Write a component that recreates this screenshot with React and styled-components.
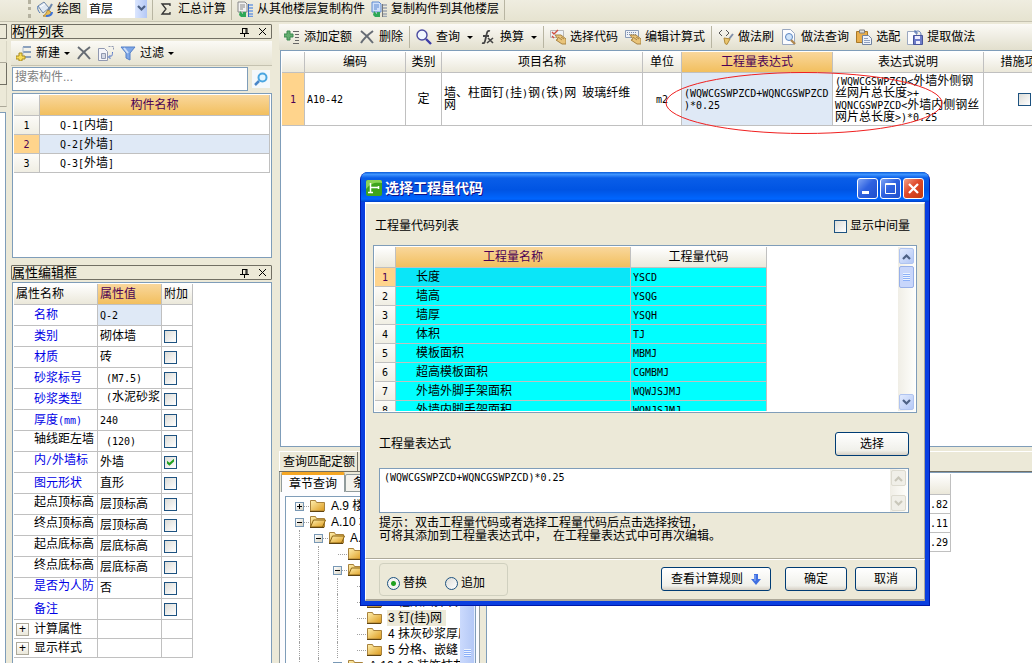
import React, { useState } from 'react';
import styled, { createGlobalStyle, css } from 'styled-components';

const COMPONENTS = ['Q-1[内墙]', 'Q-2[外墙]', 'Q-3[外墙]'];

const PROPERTIES = [
  { name: '名称', value: 'Q-2', link: true, noCheck: true, selected: true },
  { name: '类别', value: '砌体墙', link: true },
  { name: '材质', value: '砖', link: true },
  { name: '砂浆标号', value: ' (M7.5)', link: true },
  { name: '砂浆类型', value: ' (水泥砂浆', link: true, tallValue: true },
  { name: '厚度(mm)', value: '240', link: true },
  { name: '轴线距左墙', value: ' (120)', tall: true },
  { name: '内/外墙标', value: '外墙', link: true, tall: true, checked: true },
  { name: '图元形状', value: '直形', link: true },
  { name: '起点顶标高', value: '层顶标高', tall: true },
  { name: '终点顶标高', value: '层顶标高', tall: true },
  { name: '起点底标高', value: '层底标高', tall: true },
  { name: '终点底标高', value: '层底标高', tall: true },
  { name: '是否为人防', value: '否', link: true, tall: true },
  { name: '备注', value: '', link: true },
];

const CODES = [
  ['长度', 'YSCD'],
  ['墙高', 'YSQG'],
  ['墙厚', 'YSQH'],
  ['体积', 'TJ'],
  ['模板面积', 'MBMJ'],
  ['超高模板面积', 'CGMBMJ'],
  ['外墙外脚手架面积', 'WQWJSJMJ'],
  ['外墙内脚手架面积', 'WQNJSJMJ'],
];

const TREE = [
  { level: 0, text: 'A.9 楼地面', toggle: '+' },
  { level: 0, text: 'A.10 墙柱面', toggle: '-', open: true },
  { level: 1, text: 'A.10.1 抹灰', toggle: '-', open: true },
  { level: 2, text: '说明' },
  { level: 2, text: '一般抹灰', toggle: '-', open: true },
  { level: 3, text: '1 墙面抹灰' },
  { level: 3, text: '2 柱梁面抹灰' },
  { level: 3, text: '3 钉(挂)网', selected: true },
  { level: 3, text: '4 抹灰砂浆厚度' },
  { level: 3, text: '5 分格、嵌缝' },
  { level: 2, text: 'A.10.1.2 装饰抹灰', toggle: '+' },
];

const FULL_CODE = '(WQWCGSWPZCD+WQNCGSWPZCD)*0.25';

// half-width characters take exactly half of a full-width one
const Mixed = ({ children }) =>
  String(children)
    .split(/([ -~]+)/)
    .filter(Boolean)
    .map((part, i) =>
      /^[ -~]/.test(part) ? <Half key={i}>{part}</Half> : part
    );

const Icon = ({ children }) => (
  <IconSvg viewBox="0 0 16 16" aria-hidden="true">
    {children}
  </IconSvg>
);

const PaintIcon = () => (
  <Icon>
    <path d="M1 5l6-4 5 6-6 5z" fill="#dfe8f3" stroke="#7088a8" />
    <path d="M3 6l5-3" stroke="#fff" />
    <path d="M1 5c-1 2 0 5 2 7" stroke="#4f78b8" fill="none" />
    <path d="M15 3l-4 7" stroke="#6b87ad" strokeWidth="2" />
    <path d="M11 9l3 2c0 3-3 5-8 4 3-1 3-4 5-6z" fill="#e8bd55" stroke="#b08a3a" />
    <path d="M9 15c4 0 6-2 6-4" stroke="#3e74d8" strokeWidth="2" fill="none" />
  </Icon>
);

const SumIcon = () => (
  <Icon>
    <path d="M12 5V3H4l4 5-4 5h8v-2" stroke="#333" fill="none" strokeWidth="1.3" />
  </Icon>
);

const CopyFloorIcon = ({ blue }) => (
  <Icon>
    <path d="M1 1h7l2 2v8H1z" fill={blue ? '#cfe0fa' : '#f2f2f2'} stroke={blue ? '#5f8ad0' : '#888'} />
    <path d="M3 4h5M3 6h5M3 8h3" stroke={blue ? '#5f8ad0' : '#888'} />
    <path d="M11 4h5M11 7h5M11 10h5M11 13h5M11 15.500h5" stroke={blue ? '#9aa4b0' : '#6f9be0'} strokeWidth="1.600" />
    <path d="M11.500 3v13" stroke={blue ? '#777' : '#3d6cc0'} />
    <path d="M3 10l3 3v-2h3v5H4l-2-2z" fill="#2fa858" />
  </Icon>
);

const NewIcon = () => (
  <Icon>
    <path d="M7 2h8M7 7h8M7 12h8" stroke="#8aa0bd" strokeWidth="2" />
    <path d="M7 2v10" stroke="#a9bad0" />
    <path d="M3 8h3v3h3v3H6v2H3v-2H0v-3h3z" fill="#f8dc58" stroke="#a88a20" />
  </Icon>
);

const AddIcon = () => (
  <Icon>
    <path d="M3 2h3v3h3v3H6v3H3V8H0V5h3z" fill="#62ad6e" stroke="#3d8a50" />
    <path d="M9 2.500h6M11 5.500h4M11 8.500h4M11 11.500h4M9 14.500h6" stroke="#666" />
  </Icon>
);

const DeleteIcon = () => (
  <Icon>
    <path d="M2 2c4 3 8 7 12 12M14 2C10 5 5 9 2 14" stroke="#666c74" strokeWidth="2" fill="none" />
  </Icon>
);

const CopyIcon = () => (
  <Icon>
    <path d="M.5 3.500h6l3 3v9h-9z" fill="#f5f5fa" stroke="#9098b0" />
    <path d="M3.500 8.500h4v5h-4z" fill="#d4d8e4" stroke="#9098b0" />
    <path d="M10.500 1.500h5v4" stroke="#9098b0" fill="none" strokeDasharray="2 1" />
    <path d="M14.500 7c0 4-1 5-4 5M12.500 10l-2 2 2 2" stroke="#5878c8" fill="none" />
  </Icon>
);

const FilterIcon = () => (
  <Icon>
    <path d="M1 2h14l-5 6v7l-4-2V8z" fill="#7fa7e6" stroke="#5580c8" />
    <path d="M4 3l4 5" stroke="#cfe0fa" strokeWidth="2" />
  </Icon>
);

const SearchIcon = () => (
  <Icon>
    <circle cx="6" cy="6" r="5" fill="#f2f8ff" stroke="#4a4aa0" strokeWidth="1.4" />
    <path d="M10 10l5 5" stroke="#3c3ca8" strokeWidth="2.4" />
  </Icon>
);

const FxIcon = () => (
  <Icon>
    <path d="M10 2c-3-1-3 2-4 6s-1 7-4 6M3 7h6" stroke="#444" strokeWidth="1.8" fill="none" />
    <path d="M8 9l5 5M13 9l-6 5" stroke="#444" strokeWidth="1.6" />
  </Icon>
);

const HandIcon = ({ keyboard }) => (
  <Icon>
    <path d="M.5 1.500h13v7H.5z" fill="#eef2f8" stroke={keyboard ? '#8a9cb8' : '#b8b8b8'} />
    {keyboard ? (
      <path d="M2 3.500h10M2 5.500h10" stroke="#7c8eac" strokeDasharray="1 1" />
    ) : (
      <path d="M2 3l2 2 4-4M2 7l2 2" stroke="#d05040" fill="none" strokeWidth="1.4" />
    )}
    <path d="M5 6l6 0 5 4v5h-4l-6-4 2-1z" fill="#e9c47a" stroke="#a98443" />
    <path d="M8 8l4 3M11 8l3 2" stroke="#a98443" />
  </Icon>
);

const BrushIcon = () => (
  <Icon>
    <path d="M4 1L1 4l3 3M8 1l3 3-3 3" stroke="#555" fill="none" />
    <path d="M15 5l-4 5" stroke="#7e8ea8" strokeWidth="2" />
    <path d="M6 9l6 1-3 5.500-2-1z" fill="#eac56e" stroke="#b08a3a" />
  </Icon>
);

const DocSearchIcon = () => (
  <Icon>
    <path d="M1.500.5h8l4 4v11h-12z" fill="#fbfcff" stroke="#9aa8c0" />
    <circle cx="8" cy="8" r="3.5" fill="#cfe4fa" stroke="#5c86c0" />
    <path d="M10 11l4 4" stroke="#b08850" strokeWidth="2.4" />
  </Icon>
);

const PasteIcon = () => (
  <Icon>
    <path d="M.5 2.500h11v11H.5z" fill="#e8ae4c" stroke="#a87828" />
    <path d="M3.500 1h5v3h-5z" fill="#dcdcdc" stroke="#808080" />
    <path d="M6.500 6.500h6l3 3v6h-9z" fill="#eff3fa" stroke="#7082a0" />
    <path d="M8 9.500h4M8 11.500h6M8 13.500h6" stroke="#90a0c0" />
  </Icon>
);

const ExtractIcon = () => (
  <Icon>
    <path d="M.5 2.500h9v13h-9z" fill="#fbfcff" stroke="#9aa8c0" />
    <path d="M6.500 6.500h9v9h-9z" fill="#6e7cc8" stroke="#47549c" />
    <path d="M8 7h5v3H8zM9 12h4v3H9z" fill="#eef" />
    <path d="M8 3c3-2 6-1 6 3M8 1v3h3" stroke="#5878b8" fill="none" />
  </Icon>
);

const FolderIcon = ({ open }) => (
  <Icon>
    <defs>
      <linearGradient id="folder" x1="0" y1="0" x2="1" y2="1">
        <stop offset="0" stopColor="#fff0b0" />
        <stop offset="1" stopColor="#dc9a1c" />
      </linearGradient>
    </defs>
    <path d="M.5 13V2.500h5l1 2h8V13z" fill="url(#folder)" stroke="#a8823c" />
    {open && <path d="M.5 13l3-7h12l-3 7z" fill="url(#folder)" stroke="#8a6414" />}
    <path d="M0 13.500h14" stroke="#5f4310" />
  </Icon>
);

const PanelHeader = ({ title }) => (
  <PanelTitle>
    <h2>{title}</h2>
    <TitleButton aria-label="固定">
      <svg width="9" height="10" viewBox="0 0 9 10">
        <path d="M2.5 1v5M2 1.5h5M6 1v5M7 1v5M0 6.5h9M4.5 6v4" stroke="#000" />
      </svg>
    </TitleButton>
    <TitleButton aria-label="关闭">
      <svg width="9" height="9" viewBox="0 0 9 9">
        <path d="M1 1l7 7M8 1L1 8" stroke="#000" />
      </svg>
    </TitleButton>
  </PanelTitle>
);

const Chevron = ({ down }) => (
  <svg width="9" height="7" viewBox="0 0 9 7" aria-hidden="true">
    <path d={down ? 'M1 1l3.5 3.5L8 1' : 'M1 6l3.5-3.5L8 6'} fill="none" stroke="currentColor" strokeWidth="2.2" />
  </svg>
);

const VScroll = ({ disabled, thumb }) => (
  <ScrollTrack>
    <ScrollButton disabled={disabled} aria-label="向上">
      <Chevron />
    </ScrollButton>
    {thumb && (
      <ScrollThumb>
        <Grip />
      </ScrollThumb>
    )}
    <Spacer />
    <ScrollButton disabled={disabled} aria-label="向下">
      <Chevron down />
    </ScrollButton>
  </ScrollTrack>
);

const ComponentList = () => (
  <>
    <PanelHeader title="构件列表" />
    <PanelToolbar>
      <ToolButton>
        <NewIcon />
        新建
        <Caret />
      </ToolButton>
      <ToolButton aria-label="删除">
        <DeleteIcon />
      </ToolButton>
      <ToolButton aria-label="复制">
        <CopyIcon />
      </ToolButton>
      <ToolButton>
        <FilterIcon />
        过滤
        <Caret />
      </ToolButton>
    </PanelToolbar>
    <SearchRow>
      <SearchInput aria-label="搜索构件" placeholder="搜索构件..." />
      <SearchButton aria-label="搜索">
        <svg width="14" height="14" viewBox="0 0 14 14">
          <circle cx="8.500" cy="5.500" r="4" fill="#e4f5ff" stroke="#4aa5e0" strokeWidth="2" />
          <path d="M5 9l-4 4" stroke="#4a86c8" strokeWidth="2.500" />
        </svg>
      </SearchButton>
    </SearchRow>
    <ListBox>
      <Grid>
        <colgroup>
          <Col $w={26} />
          <col />
        </colgroup>
        <thead>
          <tr>
            <HeadCell />
            <HeadCell $active>构件名称</HeadCell>
          </tr>
        </thead>
        <tbody>
          {COMPONENTS.map((name, i) => (
            <tr key={name}>
              <NumCell $active={i === 1}>
                <Mixed>{i + 1}</Mixed>
              </NumCell>
              <Cell $indent $selected={i === 1}>
                <Mixed>{name}</Mixed>
              </Cell>
            </tr>
          ))}
        </tbody>
      </Grid>
    </ListBox>
  </>
);

const PropertyEditor = () => (
  <>
    <PanelHeader title="属性编辑框" />
    <PropertyBox>
      <Grid $width={179}>
        <colgroup>
          <Col $w={84} />
          <Col $w={64} />
          <Col $w={31} />
        </colgroup>
        <thead>
          <tr>
            <HeadCell $left>属性名称</HeadCell>
            <HeadCell $left $active>
              属性值
            </HeadCell>
            <HeadCell $left>附加</HeadCell>
          </tr>
        </thead>
        <tbody>
          {PROPERTIES.map((p) => (
            <tr key={p.name}>
              <PropCell $indent $link={p.link} $tall={p.tall}>
                <Mixed>{p.name}</Mixed>
              </PropCell>
              <PropCell $selected={p.selected} $tall={p.tallValue}>
                <Mixed>{p.value}</Mixed>
              </PropCell>
              <PropCell>
                {!p.noCheck && (
                  <CheckBox type="checkbox" aria-label={p.name} defaultChecked={p.checked} />
                )}
              </PropCell>
            </tr>
          ))}
          {['计算属性', '显示样式'].map((name) => (
            <tr key={name}>
              <Cell>
                <GroupLabel>
                  <ExpandButton aria-label="展开">+</ExpandButton>
                  {name}
                </GroupLabel>
              </Cell>
              <Cell />
              <Cell />
            </tr>
          ))}
        </tbody>
      </Grid>
    </PropertyBox>
  </>
);

const QuotaToolbar = () => (
  <QuotaBar>
    <ToolButton><AddIcon />添加定额</ToolButton>
    <ToolButton><DeleteIcon />删除</ToolButton>
    <Separator />
    <ToolButton $wide><SearchIcon />查询<Caret /></ToolButton>
    <ToolButton $wide><FxIcon />换算<Caret /></ToolButton>
    <Separator />
    <ToolButton><HandIcon />选择代码</ToolButton>
    <ToolButton><HandIcon keyboard />编辑计算式</ToolButton>
    <Separator />
    <ToolButton><BrushIcon />做法刷</ToolButton>
    <ToolButton><DocSearchIcon />做法查询</ToolButton>
    <ToolButton><PasteIcon />选配</ToolButton>
    <ToolButton><ExtractIcon />提取做法</ToolButton>
  </QuotaBar>
);

const QuotaTable = () => (
  <QuotaBox>
    <Grid $width={784}>
      <colgroup>
        {[23, 101, 36, 201, 39, 151, 151, 82].map((w, i) => (
          <Col key={i} $w={w} />
        ))}
      </colgroup>
      <thead>
        <tr>
          <HeadCell />
          <HeadCell>编码</HeadCell>
          <HeadCell>类别</HeadCell>
          <HeadCell>项目名称</HeadCell>
          <HeadCell>单位</HeadCell>
          <HeadCell $active>工程量表达式</HeadCell>
          <HeadCell>表达式说明</HeadCell>
          <HeadCell>措施项目</HeadCell>
        </tr>
      </thead>
      <tbody>
        <tr>
          <NumCell $active $height={53}>
            <Mixed>1</Mixed>
          </NumCell>
          <Cell><Mixed>A10-42</Mixed></Cell>
          <Cell $center>定</Cell>
          <Cell>
            <Mixed>墙、柱面钉(挂)钢(铁)网 玻璃纤维</Mixed>
            <br />网
          </Cell>
          <Cell $center><Mixed>m2</Mixed></Cell>
          <Cell $selected>
            <Mixed>(WQWCGSWPZCD+WQNCGSWPZCD</Mixed>
            <br />
            <Mixed>)*0.25</Mixed>
          </Cell>
          <Cell>
            <Mixed>(WQWCGSWPZCD&lt;外墙外侧钢</Mixed>
            <br />
            <Mixed>丝网片总长度&gt;+</Mixed>
            <br />
            <Mixed>WQNCGSWPZCD&lt;外墙内侧钢丝</Mixed>
            <br />
            <Mixed>网片总长度&gt;)*0.25</Mixed>
          </Cell>
          <Cell $center>
            <CheckBox type="checkbox" aria-label="措施项目" />
          </Cell>
        </tr>
      </tbody>
    </Grid>
  </QuotaBox>
);

const ChapterTree = () => (
  <TreePane>
    <TabRow>
      <Tab $active>章节查询</Tab>
      <Tab>条件查询</Tab>
    </TabRow>
    <TreeBox>
      <TreeList>
        {TREE.map((node) => (
          <TreeRow key={node.text}>
            {Array.from({ length: node.level }, (_, i) => (
              <TreeGuide key={i} />
            ))}
            <TreeJoint>
              {node.toggle && (
                <TreeToggle aria-label="展开">
                  <svg width="7" height="7" viewBox="0 0 7 7">
                    <path d={node.toggle === '+' ? 'M1 3.5h5M3.5 1v5' : 'M1 3.5h5'} stroke="#000" />
                  </svg>
                </TreeToggle>
              )}
            </TreeJoint>
            <FolderIcon open={node.open} />
            <TreeText $selected={node.selected}>{node.text}</TreeText>
          </TreeRow>
        ))}
      </TreeList>
      <TreeScroll>
        <Grip />
      </TreeScroll>
    </TreeBox>
  </TreePane>
);

const CodeDialog = () => {
  const [mode, setMode] = useState('replace');
  const [expression, setExpression] = useState(FULL_CODE);

  return (
    <DialogFrame role="dialog" aria-label="选择工程量代码">
      <DialogTitle>
        <svg width="16" height="16" viewBox="0 0 16 16" aria-hidden="true">
          <rect width="16" height="16" rx="2" fill="#3fa51c" />
          <path d="M0 9c5-6 9-7 16-6V2a2 2 0 0 0-2-2H2a2 2 0 0 0-2 2z" fill="#8bd455" />
          <path d="M4.500 3v10M2 12.500h5M4 7.500h9M12.500 6v3" stroke="#fff" strokeWidth="1.500" />
        </svg>
        <h1>选择工程量代码</h1>
        <WindowButton aria-label="最小化">
          <svg width="19" height="19" viewBox="0 0 19 19">
            <path d="M4 13.500h7" stroke="#fff" strokeWidth="3" />
          </svg>
        </WindowButton>
        <WindowButton aria-label="最大化">
          <svg width="19" height="19" viewBox="0 0 19 19">
            <path d="M4.500 4.500h10v10h-10zM4 5.500h11" stroke="#fff" fill="none" />
          </svg>
        </WindowButton>
        <WindowButton $close aria-label="关闭">
          <svg width="19" height="19" viewBox="0 0 19 19">
            <path d="M5 5l9 9M14 5l-9 9" stroke="#fff" strokeWidth="2.300" />
          </svg>
        </WindowButton>
      </DialogTitle>
      <DialogBody>
        <ListHeading>
          <span>工程量代码列表</span>
          <CheckLabel>
            <CheckBox type="checkbox" />
            显示中间量
          </CheckLabel>
        </ListHeading>
        <CodeBox>
          <CodeScroll>
            <Grid $width={392}>
              <colgroup>
                <Col $w={21} />
                <Col $w={235} />
                <Col $w={136} />
              </colgroup>
              <thead>
                <tr>
                  <HeadCell />
                  <HeadCell $active>工程量名称</HeadCell>
                  <HeadCell>工程量代码</HeadCell>
                </tr>
              </thead>
              <tbody>
                {CODES.map(([name, code], i) => (
                  <tr key={code}>
                    <NumCell $active={i === 0}>
                      <Mixed>{i + 1}</Mixed>
                    </NumCell>
                    <Cell $indent $cyan $current={i === 0}>
                      {name}
                    </Cell>
                    <Cell $cyan>
                      <Mixed>{code}</Mixed>
                    </Cell>
                  </tr>
                ))}
              </tbody>
            </Grid>
          </CodeScroll>
          <VScroll thumb />
        </CodeBox>
        <ExpressionHeading>
          <label htmlFor="expression">工程量表达式</label>
          <XpButton $w={74}>选择</XpButton>
        </ExpressionHeading>
        <ExpressionBox>
          <ExpressionInput
            id="expression"
            value={expression}
            onChange={(e) => setExpression(e.target.value)}
          />
          <VScroll disabled />
        </ExpressionBox>
        <Hint>
          提示：双击工程量代码或者选择工程量代码后点击选择按钮，
          <br />
          可将其添加到工程量表达式中，<Half> </Half>在工程量表达式中可再次编辑。
        </Hint>
      </DialogBody>
      <DialogFooter>
        <ModeGroup>
          <RadioLabel>
            <Radio
              type="radio"
              name="mode"
              checked={mode === 'replace'}
              onChange={() => setMode('replace')}
            />
            替换
          </RadioLabel>
          <RadioLabel>
            <Radio
              type="radio"
              name="mode"
              checked={mode === 'append'}
              onChange={() => setMode('append')}
            />
            追加
          </RadioLabel>
        </ModeGroup>
        <Spacer />
        <XpButton $w={110} $apart>
          查看计算规则
          <svg width="10" height="11" viewBox="0 0 10 11" aria-hidden="true">
            <path d="M3 0h4v5h3l-5 6-5-6h3z" fill="#3f6fe0" />
            <path d="M4 1v6" stroke="#9dbcff" />
          </svg>
        </XpButton>
        <XpButton $w={62}>确定</XpButton>
        <XpButton $w={62}>取消</XpButton>
      </DialogFooter>
    </DialogFrame>
  );
};

const App = () => {
  return (
    <>
      <GlobalStyle />
      <Page>
        <TopBar>
          <DockedTools />
          <ToolButton><PaintIcon />绘图</ToolButton>
          <FloorField>
            <FloorSelect aria-label="楼层" defaultValue="首层">
              <option>首层</option>
            </FloorSelect>
            <FloorArrow>
              <Chevron down />
            </FloorArrow>
          </FloorField>
          <Separator />
          <ToolButton><SumIcon />汇总计算</ToolButton>
          <Separator />
          <ToolButton><CopyFloorIcon />从其他楼层复制构件</ToolButton>
          <ToolButton><CopyFloorIcon blue />复制构件到其他楼层</ToolButton>
          <Separator />
        </TopBar>
        <Workspace>
          <SideStrip>
            <SideTitle />
            <SideTab />
            <SideTab $raised />
            <SideTab />
            <SideBody />
          </SideStrip>
          <LeftColumn>
            <ComponentList />
            <PropertyEditor />
          </LeftColumn>
          <RightColumn>
            <QuotaToolbar />
            <QuotaTable />
            <QueryPanel>
              <QueryTabs>
                <QueryTab>查询匹配定额</QueryTab>
              </QueryTabs>
              <QueryContent>
                <ChapterTree />
                <ResultBox>
                  <Grid $width={464}>
                    <thead>
                      <tr>
                        <HeadCell />
                      </tr>
                    </thead>
                    <tbody>
                      {['0.82', '0.11', '0.29'].map((v) => (
                        <tr key={v}>
                          <Cell $right>
                            <Mixed>{v}</Mixed>
                          </Cell>
                        </tr>
                      ))}
                    </tbody>
                  </Grid>
                </ResultBox>
              </QueryContent>
            </QueryPanel>
          </RightColumn>
        </Workspace>
        <Highlight viewBox="0 0 278 64" aria-hidden="true">
          <ellipse cx="139" cy="32" rx="138" ry="30.500" fill="none" stroke="#f02020" />
        </Highlight>
        <CodeDialog />
      </Page>
    </>
  );
};

const GlobalStyle = createGlobalStyle`
  *, *::before, *::after {
    box-sizing: border-box;
  }
  body {
    margin: 0;
    overflow: hidden;
  }
  body, button, input, select, textarea {
    font-family: 'Liberation Sans', 'Noto Sans CJK SC', sans-serif;
    font-size: 12px;
    line-height: 12px;
    color: #000;
  }
  h1, h2 {
    margin: 0;
    font-size: 12px;
    font-weight: 400;
  }
  button {
    padding: 0;
    border: none;
    background: none;
    white-space: nowrap;
  }
`;

const Page = styled.div`
  position: relative;
  display: flex;
  flex-direction: column;
  height: 100vh;
  overflow: hidden;
  background: #ece9d8;
`;

const Half = styled.span`
  font-family: 'DejaVu Sans Mono', monospace;
  font-size: 10px;
  line-height: 0;
  white-space: pre;
`;

const IconSvg = styled.svg`
  flex: none;
  width: 16px;
  height: 16px;
`;

const Spacer = styled.div`
  flex: 1;
`;

/* toolbars */
const TopBar = styled.div`
  display: flex;
  align-items: center;
  gap: 6px;
  height: 22px;
  padding-bottom: 4px;
  background: linear-gradient(#efede0, #e6e3d0);
  border-bottom: 1px solid #c5c2b0;
`;

const DockedTools = styled.div`
  width: 31px;
  height: 18px;
  border-right: 3px dotted #b5b2a0;
`;

const ToolButton = styled.button`
  display: flex;
  align-items: center;
  gap: 4px;
  height: 18px;

  ${({ $wide }) =>
    $wide &&
    css`
      & > :last-child {
        margin-left: 3px;
      }
    `}
`;

const Caret = styled.span`
  border: 3px solid transparent;
  border-top-color: #000;
  border-bottom: none;
`;

const Separator = styled.div`
  width: 1px;
  height: 22px;
  margin: 0 -1px;
  background: #b8b5a2;
`;

const FloorField = styled.div`
  display: flex;
  width: 60px;
  height: 18px;
  background: #fff;
`;

const FloorSelect = styled.select`
  appearance: none;
  flex: 1;
  min-width: 0;
  padding: 0 2px;
  border: none;
  background: transparent;
`;

const FloorArrow = styled.span`
  display: flex;
  align-items: center;
  justify-content: center;
  width: 12px;
  color: #4d6185;
  background: linear-gradient(90deg, #dbe6fe, #b4c8f6);
`;

const PanelToolbar = styled.div`
  display: flex;
  align-items: center;
  gap: 6px;
  height: 25px;
  margin-top: 2px;
  padding-left: 5px;
  background: linear-gradient(#fbfaf6, #e6e3d2);
  border-bottom: 1px solid #c5c2b0;
`;

const QuotaBar = styled.div`
  display: flex;
  align-items: center;
  gap: 7px;
  height: 26px;
  padding-left: 5px;
  overflow: hidden;
  background: linear-gradient(#fbfaf6, #e2dfcd);
`;

/* layout */
const Workspace = styled.div`
  display: flex;
  flex: 1;
  min-height: 0;
  padding-top: 2px;
`;

const SideStrip = styled.div`
  display: flex;
  flex-direction: column;
  width: 7px;
  margin-right: 4px;
`;

const SideTitle = styled.div`
  height: 15px;
  margin-bottom: 2px;
  border: 1px solid #716f64;
  border-left: none;
`;

const SideTab = styled.div`
  height: 22px;
  border-bottom: 1px solid ${({ $raised }) => ($raised ? '#716f64' : '#aca899')};
  border-right: 1px solid ${({ $raised }) => ($raised ? '#716f64' : '#d8d5c4')};
`;

const SideBody = styled.div`
  flex: 1;
  margin: 5px 1px 0 0;
  background: #fff;
  border-top: 1px solid #7f9db9;
  border-right: 1px solid #7f9db9;
`;

const LeftColumn = styled.div`
  display: flex;
  flex-direction: column;
  width: 261px;
  margin-right: 7px;
`;

const PanelTitle = styled.div`
  display: flex;
  align-items: center;
  gap: 8px;
  height: 15px;
  flex: none;
  padding-right: 3px;
  border: 1px solid #716f64;
  border-radius: 1px;

  h2 {
    flex: 1;
    font-size: 13px;
    white-space: nowrap;
  }
`;

const TitleButton = styled.button`
  display: flex;
  align-items: center;
  width: 10px;
  height: 11px;
`;

const SearchRow = styled.div`
  display: flex;
  gap: 4px;
  height: 24px;
  margin: 1px 0 2px;
  padding-left: 1px;
`;

const SearchInput = styled.input`
  flex: 1;
  min-width: 0;
  padding: 0 2px 4px;
  border: 1px solid #7f9db9;
  background: #fff;

  &::placeholder {
    color: #808080;
  }
`;

const SearchButton = styled.button`
  display: flex;
  align-items: center;
  justify-content: center;
  width: 18px;
  height: 18px;
  margin: 3px 2px 0 0;
  background: #f4f8fb;
`;

const ListBox = styled.div`
  height: 165px;
  flex: none;
  margin: 0 0 7px 1px;
  padding: 1px;
  overflow: hidden;
  background: #fff;
  border: 1px solid #7f9db9;
`;

const PropertyBox = styled.div`
  flex: 1;
  min-height: 0;
  margin: 2px 0 0 1px;
  padding: 1px;
  overflow: hidden;
  background: #fff;
  border: 1px solid #7f9db9;
  border-bottom: none;
`;

/* tables */
const Grid = styled.table`
  width: ${({ $width }) => ($width ? `${$width}px` : '100%')};
  table-layout: fixed;
  border-collapse: separate;
  border-spacing: 0;
`;

const Col = styled.col`
  width: ${({ $w }) => $w}px;
`;

const HeadCell = styled.th`
  height: 21px;
  padding: 0 2px;
  overflow: hidden;
  font-weight: 400;
  white-space: nowrap;
  text-align: ${({ $left }) => ($left ? 'left' : 'center')};
  color: ${({ $active }) => ($active ? '#4b0055' : '#000')};
  background: ${({ $active }) =>
    $active ? 'linear-gradient(#f9d79c, #f2bf5e)' : 'linear-gradient(#fff, #ebe8da)'};
  border-right: 1px solid #c0c0c0;
  border-bottom: 1px solid #c0c0c0;
`;

const cellBackground = ({ $cyan, $current, $selected }) => {
  if ($current) return '#0ae6f8';
  if ($cyan) return '#00ffff';
  if ($selected) return '#dfe9f6';
  return '#fff';
};

const Cell = styled.td`
  height: 19px;
  padding: 0 2px 0 ${({ $indent }) => ($indent ? 20 : 2)}px;
  overflow: hidden;
  white-space: nowrap;
  text-align: ${({ $center, $right }) => ($center ? 'center' : $right ? 'right' : 'left')};
  background: ${cellBackground};
  border-right: 1px solid #c0c0c0;
  border-bottom: 1px solid #c0c0c0;
`;

const PropCell = styled(Cell)`
  height: 21px;
  padding-right: 0;
  padding-bottom: ${({ $tall }) => ($tall ? 4 : 0)}px;
  color: ${({ $link }) => ($link ? '#0000e6' : '#000')};
`;

const NumCell = styled.td`
  height: ${({ $height }) => $height || 19}px;
  padding: 0;
  text-align: center;
  color: ${({ $active }) => ($active ? '#4b0055' : '#000')};
  background: ${({ $active }) => ($active ? '#ffd48c' : 'linear-gradient(#fcfbf8, #f0eee3)')};
  border-right: 1px solid #c0c0c0;
  border-bottom: 1px solid #c0c0c0;
`;

const GroupLabel = styled.div`
  display: flex;
  align-items: center;
  gap: 5px;
`;

const ExpandButton = styled.button`
  width: 13px;
  height: 13px;
  line-height: 11px;
  border: 1px solid #aca899;
  background: linear-gradient(#fff, #ebe8da);
`;

const CheckBox = styled.input`
  appearance: none;
  display: inline-block;
  flex: none;
  width: 13px;
  height: 13px;
  margin: 0;
  vertical-align: middle;
  border: 1px solid #1d5280;
  background: linear-gradient(135deg, #dcdcd7, #fff);

  &:checked::after {
    content: '';
    display: block;
    width: 7px;
    height: 7px;
    margin: 2px;
    background: #21a121;
    clip-path: polygon(0 30%, 35% 60%, 100% 0, 100% 40%, 35% 100%, 0 70%);
  }
`;

/* right side */
const RightColumn = styled.div`
  display: flex;
  flex-direction: column;
  flex: 1;
  min-width: 0;
`;

const QuotaBox = styled.div`
  flex: 1;
  min-height: 0;
  margin-left: 1px;
  padding: 1px 0 0 1px;
  overflow: hidden;
  background: #fff;
  border: 1px solid #7f9db9;
  border-right: none;
`;

const QueryPanel = styled.div`
  display: flex;
  flex-direction: column;
  height: 212px;
  margin-top: 4px;
  border-top: 1px solid #fff;
`;

const QueryTabs = styled.div`
  display: flex;
  height: 20px;
  border-bottom: 1px solid #716f64;
`;

const QueryTab = styled.div`
  padding: 4px 2px 0 3px;
  border-right: 1px solid #716f64;
  border-left: 1px solid #fff;
`;

const QueryContent = styled.div`
  display: flex;
  flex: 1;
  min-height: 0;
`;

const TreePane = styled.div`
  display: flex;
  flex-direction: column;
  width: 201px;
  margin-right: 6px;
  border-left: 1px solid #919b9c;
  border-right: 1px solid #919b9c;
  background: #fcfcfe;
`;

const TabRow = styled.div`
  display: flex;
  align-items: flex-end;
  height: 20px;
  padding-left: 1px;
  background: #ece9d8;
`;

const Tab = styled.button`
  width: 64px;
  height: ${({ $active }) => ($active ? 20 : 18)}px;
  background: ${({ $active }) => ($active ? '#fcfcfe' : '#f4f3ee')};
  border: 1px solid #919b9c;
  border-bottom: ${({ $active }) => ($active ? 'none' : '1px solid #919b9c')};
  border-top: ${({ $active }) => ($active ? '3px solid #f5a623' : '1px solid #919b9c')};
  border-radius: 2px 2px 0 0;
`;

const TreeBox = styled.div`
  display: flex;
  flex: 1;
  min-height: 0;
  margin: 4px 3px 0 5px;
  overflow: hidden;
  background: #fff;
  border: 1px solid #7f9db9;
  border-bottom: none;
`;

const TreeList = styled.ul`
  flex: 1;
  min-width: 0;
  margin: 0;
  padding: 1px 0 0 4px;
  overflow: hidden;
  list-style: none;
`;

const TreeRow = styled.li`
  display: flex;
  align-items: center;
  height: 16px;
  white-space: nowrap;
`;

const TreeGuide = styled.span`
  flex: none;
  width: 10px;
  height: 16px;
  margin-right: 9px;
  border-right: 1px dotted #a0a0a0;
`;

const TreeJoint = styled.span`
  display: flex;
  align-items: center;
  flex: none;
  width: 20px;
  height: 16px;
  padding-left: 5px;
  background: repeating-linear-gradient(90deg, #a0a0a0 0 1px, transparent 1px 2px) 10px 8px / 10px 1px no-repeat;
`;

const TreeToggle = styled.button`
  display: flex;
  width: 9px;
  height: 9px;
  border: 1px solid #7898b5;
  background: linear-gradient(135deg, #fff, #d8d4c4);
`;

const TreeText = styled.span`
  margin-left: 4px;
  padding: 2px 4px 2px 1px;
  background: ${({ $selected }) => ($selected ? '#ece9d8' : 'transparent')};
`;

const Grip = styled.span`
  width: 7px;
  height: 8px;
  background: repeating-linear-gradient(#eef4fe 0 1px, #8cb0f8 1px 2px);
`;

const TreeScroll = styled.div`
  display: flex;
  justify-content: center;
  align-items: flex-end;
  width: 15px;
  padding-bottom: 6px;
  background: linear-gradient(90deg, #cbdafd, #b4c8f6);
  border-right: 1px solid #e8effd;
`;

const ResultBox = styled.div`
  flex: 1;
  min-width: 0;
  padding-top: 1px;
  overflow: hidden;
  background: #fff;
  border-top: 1px solid #7f9db9;
  border-left: 1px solid #7f9db9;
`;

const Highlight = styled.svg`
  position: absolute;
  left: 665px;
  top: 71px;
  width: 278px;
  height: 64px;
  pointer-events: none;
`;

/* dialog */
const DialogFrame = styled.div`
  position: absolute;
  left: 360px;
  top: 172px;
  display: flex;
  flex-direction: column;
  width: 570px;
  padding: 0 4px 4px;
  background: #0a3fe0;
  border: 1px solid #0019a8;
  border-top: none;
  border-radius: 8px 8px 0 0;
`;

const DialogTitle = styled.div`
  display: flex;
  align-items: center;
  gap: 2px;
  height: 30px;
  margin: 0 -4px;
  padding: 2px 5px 0;
  background: linear-gradient(#0a5cd8, #3f95ff 8%, #0a5ee8 20%, #0054e3 60%, #0066ff 90%, #0040c8);
  border-radius: 7px 7px 0 0;

  h1 {
    flex: 1;
    padding-left: 1px;
    font-size: 14px;
    font-weight: 700;
    line-height: 16px;
    color: #fff;
    text-shadow: 1px 1px #0f1089;
  }
`;

const WindowButton = styled.button`
  display: flex;
  width: 21px;
  height: 21px;
  border: 1px solid #fff;
  border-radius: 3px;
  background: ${({ $close }) =>
    $close
      ? 'linear-gradient(135deg, #f0a088, #e0492a 45%, #c23a10)'
      : 'linear-gradient(135deg, #7ea4f4, #2f62e0 45%, #1f4fcc)'};
`;

const DialogBody = styled.div`
  display: flex;
  flex-direction: column;
  height: 357px;
  padding: 10px 7px 0 8px;
  background: #ece9d8;
  border: 1px solid #fff;
  border-top-width: 2px;
  border-right-color: #aca899;
  border-bottom-color: #aca899;
`;

const ListHeading = styled.div`
  display: flex;
  align-items: center;
  justify-content: space-between;
  height: 24px;
  margin-bottom: 7px;
  padding: 0 7px 0 1px;
`;

const CheckLabel = styled.label`
  display: flex;
  align-items: center;
  gap: 3px;
`;

const CodeBox = styled.div`
  display: flex;
  height: 168px;
  margin: 0 0 0 -1px;
  padding: 1px;
  background: #fff;
  border: 1px solid #7f9db9;
`;

const CodeScroll = styled.div`
  flex: 1;
  overflow: hidden;
`;

const ScrollTrack = styled.div`
  display: flex;
  flex-direction: column;
  width: 17px;
  padding: 1px;
  background: linear-gradient(90deg, #f0eee6, #fefefb);
`;

const ScrollButton = styled.button`
  display: flex;
  align-items: center;
  justify-content: center;
  flex: none;
  width: 15px;
  height: 16px;
  color: #4d6185;
  background: linear-gradient(135deg, #e1eafe, #b4c8f6);
  border: 1px solid #b0c4f0;
  border-radius: 2px;

  &:disabled {
    color: #c9c7ba;
    background: #f0efe8;
    border-color: #dddbd0;
  }
`;

const ScrollThumb = styled.div`
  display: flex;
  align-items: center;
  justify-content: center;
  width: 15px;
  height: 22px;
  margin-top: 2px;
  background: #c8d6fb;
  border: 1px solid #98b0e8;
  border-radius: 2px;
`;

const ExpressionHeading = styled.div`
  display: flex;
  align-items: center;
  justify-content: space-between;
  height: 24px;
  margin: 19px 0 12px;
  padding: 0 8px 0 5px;
`;

const XpButton = styled.button`
  display: flex;
  align-items: center;
  justify-content: center;
  gap: 8px;
  width: ${({ $w }) => $w}px;
  height: 24px;
  margin-right: ${({ $apart }) => ($apart ? 6 : 0)}px;
  border: 1px solid #003c74;
  border-radius: 3px;
  background: linear-gradient(#fff, #f0f0ea 80%, #d6d0c5);
`;

const ExpressionBox = styled.div`
  display: flex;
  height: 45px;
  margin: 0 8px 0 5px;
  padding: 0 1px;
  background: #fff;
  border: 1px solid #7f9db9;
`;

const ExpressionInput = styled.textarea`
  flex: 1;
  padding: 3px;
  border: none;
  outline: none;
  resize: none;
  overflow: hidden;
  background: transparent;
  font-family: 'DejaVu Sans Mono', monospace;
  font-size: 10px;
`;

const Hint = styled.p`
  margin: 4px 0 0 5px;
  line-height: 13px;
`;

const DialogFooter = styled.div`
  display: flex;
  align-items: center;
  gap: 8px;
  height: 42px;
  padding: 3px 7px 4px 13px;
  background: #ece9d8;
  border: 1px solid #fff;
  border-right-color: #aca899;
  border-bottom: 2px solid #aca899;
`;

const ModeGroup = styled.div`
  display: flex;
  align-items: center;
  gap: 18px;
  width: 129px;
  height: 33px;
  padding: 8px 0 0 7px;
  border: 1px solid #d0d0bf;
  border-radius: 4px;
`;

const RadioLabel = styled.label`
  display: flex;
  align-items: center;
  gap: 3px;
`;

const Radio = styled.input`
  appearance: none;
  width: 13px;
  height: 13px;
  margin: 0;
  border: 1px solid #1d5280;
  border-radius: 50%;
  background: linear-gradient(135deg, #dcdcd7, #fff);

  &:checked {
    background: radial-gradient(circle, #21a121 0 2px, #f4f4f2 3px);
  }
`;

export default App;
